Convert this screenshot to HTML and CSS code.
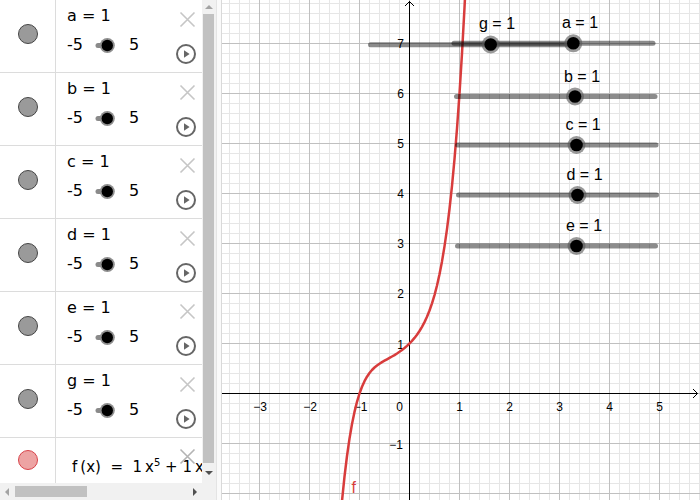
FILE: index.html
```html
<!DOCTYPE html>
<html>
<head>
<meta charset="utf-8">
<link rel="stylesheet" href="styles.css">
</head>
<body>
<div class="algebra">
  <div class="list">
    <div class="row">
      <div class="marker"><span class="dot"></span></div>
      <div class="content">
        <div class="lines">
          <div class="name">a = 1</div>
          <div class="slider"><span>-5</span><svg class="mini" width="46" height="21" viewBox="0 0 46 21"><line x1="15" y1="11.5" x2="22" y2="11.5" class="stub"/><circle cx="24.3" cy="11.5" r="7.5" class="ring"/><circle cx="24.3" cy="11.5" r="5.7" class="core"/></svg><span>5</span></div>
        </div>
        <div class="tools">
          <svg class="close" width="17" height="17" viewBox="0 0 17 17"><path d="M1.5 1.5L15.5 15.5M15.5 1.5L1.5 15.5"/></svg>
          <svg class="play" width="22" height="22" viewBox="0 0 22 22"><circle cx="11" cy="11" r="9"/><path d="M9 7.3L14.6 11L9 14.7Z"/></svg>
        </div>
      </div>
    </div>
    <div class="row">
      <div class="marker"><span class="dot"></span></div>
      <div class="content">
        <div class="lines">
          <div class="name">b = 1</div>
          <div class="slider"><span>-5</span><svg class="mini" width="46" height="21" viewBox="0 0 46 21"><line x1="15" y1="11.5" x2="22" y2="11.5" class="stub"/><circle cx="24.3" cy="11.5" r="7.5" class="ring"/><circle cx="24.3" cy="11.5" r="5.7" class="core"/></svg><span>5</span></div>
        </div>
        <div class="tools">
          <svg class="close" width="17" height="17" viewBox="0 0 17 17"><path d="M1.5 1.5L15.5 15.5M15.5 1.5L1.5 15.5"/></svg>
          <svg class="play" width="22" height="22" viewBox="0 0 22 22"><circle cx="11" cy="11" r="9"/><path d="M9 7.3L14.6 11L9 14.7Z"/></svg>
        </div>
      </div>
    </div>
    <div class="row">
      <div class="marker"><span class="dot"></span></div>
      <div class="content">
        <div class="lines">
          <div class="name">c = 1</div>
          <div class="slider"><span>-5</span><svg class="mini" width="46" height="21" viewBox="0 0 46 21"><line x1="15" y1="11.5" x2="22" y2="11.5" class="stub"/><circle cx="24.3" cy="11.5" r="7.5" class="ring"/><circle cx="24.3" cy="11.5" r="5.7" class="core"/></svg><span>5</span></div>
        </div>
        <div class="tools">
          <svg class="close" width="17" height="17" viewBox="0 0 17 17"><path d="M1.5 1.5L15.5 15.5M15.5 1.5L1.5 15.5"/></svg>
          <svg class="play" width="22" height="22" viewBox="0 0 22 22"><circle cx="11" cy="11" r="9"/><path d="M9 7.3L14.6 11L9 14.7Z"/></svg>
        </div>
      </div>
    </div>
    <div class="row">
      <div class="marker"><span class="dot"></span></div>
      <div class="content">
        <div class="lines">
          <div class="name">d = 1</div>
          <div class="slider"><span>-5</span><svg class="mini" width="46" height="21" viewBox="0 0 46 21"><line x1="15" y1="11.5" x2="22" y2="11.5" class="stub"/><circle cx="24.3" cy="11.5" r="7.5" class="ring"/><circle cx="24.3" cy="11.5" r="5.7" class="core"/></svg><span>5</span></div>
        </div>
        <div class="tools">
          <svg class="close" width="17" height="17" viewBox="0 0 17 17"><path d="M1.5 1.5L15.5 15.5M15.5 1.5L1.5 15.5"/></svg>
          <svg class="play" width="22" height="22" viewBox="0 0 22 22"><circle cx="11" cy="11" r="9"/><path d="M9 7.3L14.6 11L9 14.7Z"/></svg>
        </div>
      </div>
    </div>
    <div class="row">
      <div class="marker"><span class="dot"></span></div>
      <div class="content">
        <div class="lines">
          <div class="name">e = 1</div>
          <div class="slider"><span>-5</span><svg class="mini" width="46" height="21" viewBox="0 0 46 21"><line x1="15" y1="11.5" x2="22" y2="11.5" class="stub"/><circle cx="24.3" cy="11.5" r="7.5" class="ring"/><circle cx="24.3" cy="11.5" r="5.7" class="core"/></svg><span>5</span></div>
        </div>
        <div class="tools">
          <svg class="close" width="17" height="17" viewBox="0 0 17 17"><path d="M1.5 1.5L15.5 15.5M15.5 1.5L1.5 15.5"/></svg>
          <svg class="play" width="22" height="22" viewBox="0 0 22 22"><circle cx="11" cy="11" r="9"/><path d="M9 7.3L14.6 11L9 14.7Z"/></svg>
        </div>
      </div>
    </div>
    <div class="row">
      <div class="marker"><span class="dot"></span></div>
      <div class="content">
        <div class="lines">
          <div class="name">g = 1</div>
          <div class="slider"><span>-5</span><svg class="mini" width="46" height="21" viewBox="0 0 46 21"><line x1="15" y1="11.5" x2="22" y2="11.5" class="stub"/><circle cx="24.3" cy="11.5" r="7.5" class="ring"/><circle cx="24.3" cy="11.5" r="5.7" class="core"/></svg><span>5</span></div>
        </div>
        <div class="tools">
          <svg class="close" width="17" height="17" viewBox="0 0 17 17"><path d="M1.5 1.5L15.5 15.5M15.5 1.5L1.5 15.5"/></svg>
          <svg class="play" width="22" height="22" viewBox="0 0 22 22"><circle cx="11" cy="11" r="9"/><path d="M9 7.3L14.6 11L9 14.7Z"/></svg>
        </div>
      </div>
    </div>
    <div class="row fn">
      <div class="marker"><span class="dot red"></span></div>
      <div class="content">
        <div class="formula">f&thinsp;(x) &nbsp;=&nbsp; 1&thinsp;x<sup>5</sup> + 1&thinsp;x<sup>4</sup> + 1&thinsp;x<sup>3</sup> + 1&thinsp;x<sup>2</sup> + 1&thinsp;x + 1</div>
        <div class="tools">
          <svg class="close" width="17" height="17" viewBox="0 0 17 17"><path d="M1.5 1.5L15.5 15.5M15.5 1.5L1.5 15.5"/></svg>
        </div>
      </div>
    </div>
  </div>
  <div class="vscroll">
    <div class="arrow-box up-box"><span class="tri-up"></span></div>
    <div class="vthumb"></div>
    <div class="arrow-box down-box"><span class="tri-down"></span></div>
  </div>
  <div class="hscroll">
    <div class="arrow-box left-box"><span class="tri-left"></span></div>
    <div class="hthumb"></div>
    <div class="hspace"></div>
    <div class="arrow-box right-box"><span class="tri-right"></span></div>
  </div>
  <div class="corner"></div>
</div>
<div class="divider"></div>
<div class="graph">
  <svg class="plot" width="478" height="500" viewBox="222 0 478 500">
    <defs>
      <pattern id="minor" width="10" height="10" patternUnits="userSpaceOnUse" x="409" y="393">
        <path d="M0.5 0V10M0 0.5H10" class="g-minor"/>
      </pattern>
      <pattern id="major" width="50" height="50" patternUnits="userSpaceOnUse" x="409" y="393">
        <path d="M0.5 0V50M0 0.5H50" class="g-major"/>
      </pattern>
    </defs>
    <rect x="222" y="0" width="478" height="500" fill="url(#minor)"/>
    <rect x="222" y="0" width="478" height="500" fill="url(#major)"/>
    <path class="axis" d="M409.5 1V500M222 393.5H697.5"/>
    <path class="axis" d="M405 6L409.5 1.5L414 6M693 389L697.5 393.5L693 398"/>

    <text class="ax" x="260" y="410.5" text-anchor="middle">−3</text>
    <text class="ax" x="310" y="410.5" text-anchor="middle">−2</text>
    <text class="ax" x="360.5" y="410.5" text-anchor="middle">−1</text>
    <text class="ax" x="403" y="410.5" text-anchor="end">0</text>
    <text class="ax" x="459.5" y="410.5" text-anchor="middle">1</text>
    <text class="ax" x="509.5" y="410.5" text-anchor="middle">2</text>
    <text class="ax" x="559.5" y="410.5" text-anchor="middle">3</text>
    <text class="ax" x="609.5" y="410.5" text-anchor="middle">4</text>
    <text class="ax" x="659.5" y="410.5" text-anchor="middle">5</text>

    <text class="ax" x="404" y="48" text-anchor="end">7</text>
    <text class="ax" x="404" y="98" text-anchor="end">6</text>
    <text class="ax" x="404" y="148" text-anchor="end">5</text>
    <text class="ax" x="404" y="198" text-anchor="end">4</text>
    <text class="ax" x="404" y="248" text-anchor="end">3</text>
    <text class="ax" x="404" y="298" text-anchor="end">2</text>
    <text class="ax" x="404" y="348.5" text-anchor="end">1</text>
    <text class="ax" x="403" y="448.5" text-anchor="end">−1</text>

    <polyline class="curve" points="342,501 344.5,476.7 347,456 349.5,438.6 352,424 354.5,411.9 357,401.8 359.5,393.5 362,386.7 364.5,381.2 367,376.7 369.5,373 372,370 374.5,367.5 377,365.5 379.5,363.7 382,362.1 384.5,360.7 387,359.3 389.5,357.9 392,356.5 394.5,355.1 397,353.5 399.5,351.8 402,350 404.5,348 407,345.9 409.5,343.5 412,340.9 414.5,337.9 417,334.7 419.5,331 422,326.8 424.5,322.1 427,316.7 429.5,310.5 432,303.3 434.5,295.1 437,285.5 439.5,274.3 442,261.4 444.5,246.4 447,229.1 449.5,209 452,185.9 454.5,159.2 457,128.6 459.5,93.5 462,53.4 464.5,7.7 465.5,-12.3"/>
    <text class="flabel" x="351.5" y="492.5">f</text>

    <line class="track" x1="370.5" y1="44.7" x2="571" y2="44.7"/>
    <line class="track" x1="454" y1="43.3" x2="653" y2="43.3"/>
    <line class="track" x1="456.5" y1="96.5" x2="655" y2="96.5"/>
    <line class="track" x1="457.5" y1="145" x2="656" y2="145"/>
    <line class="track" x1="458.5" y1="195" x2="656.5" y2="195"/>
    <line class="track" x1="457.5" y1="246" x2="655.5" y2="246"/>

    <circle class="ring" cx="490.7" cy="44.5" r="9"/><circle class="core" cx="490.7" cy="44.5" r="6.3"/>
    <circle class="ring" cx="573.3" cy="43.3" r="9"/><circle class="core" cx="573.3" cy="43.3" r="6.3"/>
    <circle class="ring" cx="575" cy="96.5" r="9"/><circle class="core" cx="575" cy="96.5" r="6.3"/>
    <circle class="ring" cx="576.5" cy="145" r="9"/><circle class="core" cx="576.5" cy="145" r="6.3"/>
    <circle class="ring" cx="577.5" cy="195" r="9"/><circle class="core" cx="577.5" cy="195" r="6.3"/>
    <circle class="ring" cx="576.5" cy="246" r="9"/><circle class="core" cx="576.5" cy="246" r="6.3"/>

    <text class="sl" x="479" y="29">g = 1</text>
    <text class="sl" x="562" y="28">a = 1</text>
    <text class="sl" x="564" y="81.5">b = 1</text>
    <text class="sl" x="565.5" y="130">c = 1</text>
    <text class="sl" x="566.5" y="180">d = 1</text>
    <text class="sl" x="566" y="231">e = 1</text>
  </svg>
</div>
</body>
</html>
```

FILE: styles.css
```css
* { box-sizing: border-box; }

body {
  margin: 0;
  width: 700px;
  height: 500px;
  overflow: hidden;
  display: flex;
  background: #fff;
  font-family: "DejaVu Sans", "Liberation Sans", sans-serif;
  color: #000;
}

/* ---------- algebra view ---------- */
.algebra {
  width: 216px;
  height: 500px;
  display: grid;
  grid-template-columns: 202px 14px;
  grid-template-rows: 483px 17px;
  flex: none;
}

.list {
  overflow: hidden;
  min-width: 0;
}

.row {
  height: 73px;
  border-bottom: 1px solid #dcdcdc;
  display: grid;
  grid-template-columns: 56px 1fr;
}

.marker {
  border-right: 1px solid #dcdcdc;
  display: flex;
  justify-content: center;
  align-items: flex-start;
  padding-top: 24px;
}

.dot {
  width: 20px;
  height: 20px;
  border-radius: 50%;
  background: #9a9a9a;
  border: 1px solid #454545;
}

.dot.red {
  background: #eda3a3;
  border-color: #d8434a;
}

.content {
  display: grid;
  grid-template-columns: 1fr 30px;
  padding-left: 11px;
  min-width: 0;
  overflow: hidden;
}

.name {
  font-size: 16px;
  line-height: 21px;
  padding-top: 5px;
  white-space: nowrap;
}

.slider {
  display: flex;
  align-items: center;
  height: 21px;
  margin-top: 8px;
  font-size: 16px;
  line-height: 21px;
}

.mini { display: block; flex: none; }
.mini .stub { stroke: #8a8a8a; stroke-width: 5; stroke-linecap: round; }
.mini .ring { fill: #8f8f8f; }
.mini .core { fill: #000; }

.tools {
  display: flex;
  flex-direction: column;
  align-items: center;
  padding-top: 11px;
  gap: 15px;
}

.close { display: block; }
.close path { stroke: #c6c6c6; stroke-width: 1.6; fill: none; }

.play { display: block; margin-left: -2px; }
.play circle { fill: none; stroke: #666; stroke-width: 2; }
.play path { fill: #666; }

.fn .marker { padding-top: 12px; }
.fn .content { grid-template-rows: 100%; }
.fn .formula {
  grid-area: 1 / 1 / 2 / 3;
  padding-left: 5px;
  padding-top: 19px;
  font-size: 15px;
  line-height: 20px;
  white-space: nowrap;
  overflow: hidden;
}
.fn .formula sup { font-size: 10px; vertical-align: 6px; line-height: 0; }
.fn .tools {
  grid-area: 1 / 2 / 2 / 3;
  padding-top: 10px;
}
.fn .close path { stroke: #b4b4b4; }

/* scrollbars */
.vscroll {
  background: #f1f1f1;
  display: flex;
  flex-direction: column;
}

.arrow-box {
  display: flex;
  align-items: center;
  justify-content: center;
  flex: none;
}

.up-box { height: 14px; }
.down-box { flex: 1; }

.vthumb {
  height: 449px;
  margin: 0 2px 0 1px;
  background: #c1c1c1;
}

.tri-up {
  width: 0; height: 0;
  border-left: 4px solid transparent;
  border-right: 4px solid transparent;
  border-bottom: 4px solid #a3a3a3;
}

.tri-down {
  width: 0; height: 0;
  border-left: 4px solid transparent;
  border-right: 4px solid transparent;
  border-top: 4px solid #505050;
}

.hscroll {
  background: #f1f1f1;
  display: flex;
  align-items: center;
}

.left-box { width: 13px; height: 17px; }
.right-box { width: 14px; height: 17px; }
.hspace { flex: 1; }

.hthumb {
  width: 72px;
  height: 11px;
  margin-left: 2px;
  background: #c1c1c1;
}

.tri-left {
  width: 0; height: 0;
  border-top: 4px solid transparent;
  border-bottom: 4px solid transparent;
  border-right: 4px solid #a3a3a3;
}

.tri-right {
  width: 0; height: 0;
  border-top: 4px solid transparent;
  border-bottom: 4px solid transparent;
  border-left: 4px solid #505050;
}

.corner { background: #f1f1f1; }

/* divider */
.divider {
  width: 6px;
  height: 500px;
  flex: none;
  background: #fafafa;
  border-left: 1px solid #e4e4e4;
  border-right: 1px solid #d9d9d9;
}

/* graphics view */
.graph {
  width: 478px;
  height: 500px;
  flex: none;
}

.plot { display: block; }

.g-minor { stroke: #e6e6e6; stroke-width: 1; fill: none; }
.g-major { stroke: #c0c0c0; stroke-width: 1; fill: none; }

.axis { stroke: #000; stroke-width: 1; fill: none; }

.ax {
  font-family: "Liberation Sans", Arial, sans-serif;
  font-size: 12px;
  fill: #000;
}

.curve {
  fill: none;
  stroke: #d83c3c;
  stroke-width: 2.5;
  stroke-linejoin: round;
}

.flabel {
  font-family: "Liberation Sans", Arial, sans-serif;
  font-size: 16px;
  fill: #d83c3c;
}

.track {
  stroke: #000;
  stroke-opacity: 0.45;
  stroke-width: 5;
  stroke-linecap: round;
}

.plot .ring { fill: #555; fill-opacity: 0.6; }
.plot .core { fill: #000; }

.sl {
  font-family: "Liberation Sans", Arial, sans-serif;
  font-size: 16px;
  fill: #000;
}
```
